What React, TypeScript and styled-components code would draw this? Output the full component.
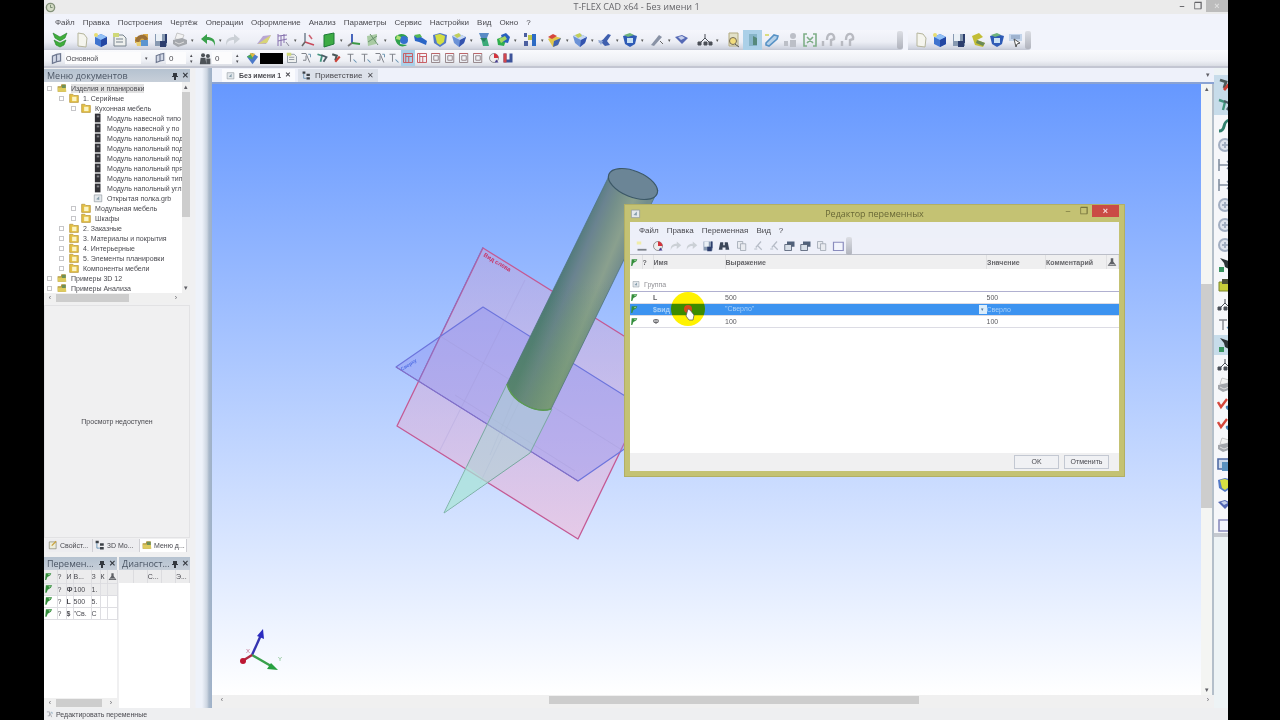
import React from 'react';
import styled, { createGlobalStyle } from 'styled-components';

const Global = createGlobalStyle`
  * { box-sizing: border-box; }
  body { margin: 0; background: #000; font-family: "Liberation Sans", Arial, sans-serif; font-size: 8px; color: #4a4a50; }
  button, input, select { font: inherit; color: inherit; margin: 0; padding: 0; border: 0; background: transparent; border-radius: 0; }
  a { color: inherit; text-decoration: none; }
  svg { display: block; flex: none; }
  table { border-collapse: collapse; table-layout: fixed; width: 100%; }
  th, td { padding: 0; text-align: left; font-weight: normal; overflow: hidden; white-space: nowrap; }
`;

/* ---------- icons ---------- */

type Glyph =
  | 'chevrons' | 'page' | 'cube' | 'sheet' | 'home' | 'save' | 'print' | 'undo' | 'redo' | 'plane' | 'grid'
  | 'axes' | 'greenPlane' | 'csys' | 'section' | 'spin' | 'sweep' | 'shield' | 'yellowShield' | 'loft' | 'bool'
  | 'pattern' | 'brick' | 'blades' | 'ring' | 'pen' | 'diamond' | 'nodes' | 'search' | 'panel' | 'link' | 'person'
  | 'bracket' | 'arrowUp' | 'coin' | 'pick' | 'layers' | 'people' | 'palette' | 'snap' | 'snapGreen' | 'snapRed'
  | 'tee' | 'boxRed' | 'boxGray' | 'pie' | 'magnet' | 'folder' | 'subfolder' | 'module' | 'part' | 'app' | 'props'
  | 'tree' | 'flag' | 'person2' | 'filter' | 'binoc' | 'copy' | 'cut' | 'windows' | 'curve' | 'orbit' | 'fit'
  | 'lamp' | 'lampYellow' | 'checkRed' | 'monitor' | 'frame';

const art: Record<Glyph, React.ReactNode> = {
  chevrons: <g fill="#3fae3a" stroke="#237f2a" strokeWidth=".6"><path d="M1 1l7 4 7-4-2 5-5 3-5-3z" /><path d="M2 8l6 3 6-3-2 5-4 2-4-2z" /></g>,
  page: <path d="M4 1l6 1 3 4-1 9-8-1z" fill="#f5f5ee" stroke="#b5b59c" />,
  cube: <g><path d="M8 2l6 3v7l-6 3-6-3V5z" fill="#3f74cf" /><path d="M8 2l6 3-6 3-6-3z" fill="#93c0f6" /><path d="M8 8l6-3v7l-6 3z" fill="#2447a3" /><circle cx="3" cy="3" r="2" fill="#e8dd72" /></g>,
  sheet: <g fill="none" stroke="#77828d"><path d="M2 3h9l3 3v8H2z" fill="#eef0ee" /><path d="M4 7h7M4 10h7" /><path d="M1 1h6v4H1z" fill="#cfd878" stroke="none" /></g>,
  home: <g><path d="M1 5h7l1-3h5v9H1z" fill="#d9a947" /><path d="M1 9c2-8 11-8 13-2l-3 2c-2-4-5-3-6 2z" fill="#9b7138" /><path d="M7 8h7v6H5z" fill="#5b95d0" /><path d="M2 10h5v4H3z" fill="#e8ce72" /></g>,
  save: <g><path d="M2 2h12v12H2z" fill="#8799b1" /><path d="M3 2h6v7H3z" fill="#eaf0f6" /><path d="M7 9h6v6H7zM12 2h2v9h-2z" fill="#2d3e6d" /></g>,
  print: <g><path d="M5 1l7 2-2 5-7-1z" fill="#f2f2f2" stroke="#b5b5b5" strokeWidth=".7" /><path d="M1 8l9-2 5 2v4l-9 3-5-3z" fill="#a4a7ac" /><path d="M3 10l4 2 5-2" stroke="#ddd" fill="none" /></g>,
  undo: <path d="M1 7l6-5v3c5 0 8 2 8 7v2c-1-4-3-6-8-6v4z" fill="#39a04b" />,
  redo: <path d="M15 7L9 2v3C4 5 1 7 1 12v2c1-4 3-6 8-6v4z" fill="#cbd0d6" />,
  plane: <g><path d="M1 12l6-8 8-1-5 9z" fill="#b9a6d3" /><path d="M2 12l7-5 6-4-4 8z" fill="#d8d477" /></g>,
  grid: <g stroke="#8671ae" fill="none"><path d="M3 2v12M6 4v10M9 2v9M3 4l9-1M3 9l9-2" /><path d="M11 10l3 4" stroke="#889" /></g>,
  axes: <g fill="none" strokeWidth="1.6"><path d="M5 1v9" stroke="#7c8896" /><path d="M5 10l9 3" stroke="#c9485a" /><path d="M5 10l-3 4" stroke="#666" /><path d="M9 3l3 4" stroke="#cc6170" /></g>,
  greenPlane: <path d="M3 3l10-2v11L3 15z" fill="#3dab44" stroke="#1c7a36" />,
  csys: <g fill="none" strokeWidth="1.8"><path d="M6 2v9" stroke="#3455b5" /><path d="M6 11l8 1" stroke="#3c9946" /><path d="M6 11l-4 3" stroke="#777" /></g>,
  section: <g><path d="M2 4l10-2-1 10-8 2z" fill="#a9cba3" /><path d="M5 2l8 11M3 10l9-6" stroke="#69926e" /></g>,
  spin: <g><path d="M1 5c5-5 11-3 13 1l-4 1-3-1-1 6 7 1c-6 4-12-1-12-8z" fill="#2fa04c" /><circle cx="10" cy="8" r="4" fill="#3470cf" /><path d="M3 3l4 2-1 3-4-1z" fill="#aee173" /></g>,
  sweep: <g><path d="M1 4l7 1 6 4-1 4-7-3-4-1z" fill="#2a65c6" /><path d="M1 3l6-1 2 3-5 1z" fill="#54b754" /></g>,
  shield: <g><path d="M1 4l7-2 7 3-2 6-5 4-5-4z" fill="#6b92d7" /><path d="M1 4l7-2 7 3-6 3z" fill="#c7d8f2" /><path d="M9 8l6-3-2 6-5 4z" fill="#3453ae" /><path d="M3 3l5-2 2 3-4 2z" fill="#c1cf5c" /></g>,
  yellowShield: <g><path d="M1 3l7-2 7 2-1 8-6 4-6-4z" fill="#5379c6" /><path d="M3 3l5-1 5 2-1 6-4 3-3-2z" fill="#d5df42" /></g>,
  loft: <g><path d="M3 1h10l-2 5H5z" fill="#5a8bc6" /><path d="M5 6h6l2 8H7z" fill="#3cab79" /><path d="M4 6h7l-3 4z" fill="#278060" /></g>,
  bool: <g><path d="M2 7l5-2 4 3-2 6-6-1z" fill="#2fae4e" /><path d="M6 3l5-2 4 4-2 6-5-1z" fill="#2961be" /><path d="M4 7l6-3 2 3-6 4z" fill="#a5d661" /></g>,
  pattern: <g><path d="M2 1h3v4H2zM2 9h4v5H2z" fill="#4b5fa0" /><path d="M6 3h4v5H6z" fill="#bfc74a" /><path d="M10 2h4v12h-4z" fill="#2d6bc4" /></g>,
  brick: <g><path d="M1 7l6-3 7 2-3 7-5 2z" fill="#e0c64a" /><path d="M1 5l5-3 4 2-5 3z" fill="#d5463d" /><path d="M7 9l7-3-3 7-5 2z" fill="#3f63b2" /></g>,
  blades: <g><path d="M1 10c5-1 6-4 10-8l3 1-4 6 3 4-5 1-3-3z" fill="#3f5fae" /><path d="M1 8l5 1-2 4z" fill="#8ea6d4" /></g>,
  ring: <g><path d="M1 4l7-2 7 2-2 8-5 3-5-3z" fill="#2f5bb6" /><path d="M5 6h6v5H5z" fill="#c9e1f4" /><path d="M2 3l6-2 4 2-6 2z" fill="#6fb37b" /></g>,
  pen: <g><path d="M2 13l8-10 3 2-8 9z" fill="#8992a5" /><path d="M11 9l3 3" stroke="#666" /></g>,
  diamond: <g><path d="M1 5l7-2 6 3-6 6z" fill="#5569b5" /><path d="M4 5l4-1 3 2-4 2z" fill="#c6d0eb" /></g>,
  nodes: <g stroke="#4a4f57" fill="#4a4f57"><path d="M3 11l5-5 5 5M8 6V2" fill="none" /><path d="M1 10h3v3H1zM7 10h3v3H7zM12 10h3v3h-3z" /></g>,
  search: <g><path d="M3 1h9v13H3z" fill="#e2e1c8" stroke="#b3ab80" /><circle cx="7" cy="9" r="3.5" fill="#f2dc7d" stroke="#766c57" /><path d="M9 12l4 3" stroke="#555" /></g>,
  panel: <g><path d="M4 2h8v12H4z" fill="#86b4c8" /><path d="M8 4l4 2v7H8z" fill="#55897b" /></g>,
  link: <g fill="none" stroke="#5792c5" strokeWidth="1.6"><path d="M2 11l8-8 4 1-1 3-8 7-3-1z" fill="#b5d0e8" /><path d="M1 3h4" stroke="#d5d760" /></g>,
  person: <g fill="#bcbfc7"><circle cx="10" cy="4" r="3" /><path d="M7 8h6v7H7zM1 9h4v5H1z" /></g>,
  bracket: <g fill="none" stroke="#7fae87" strokeWidth="1.6"><path d="M5 2H2v12h3M11 2h3v12h-3M5 5l6 6M11 5l-6 6" /></g>,
  arrowUp: <g fill="none" stroke="#b8bac1" strokeWidth="2.4"><path d="M2 14V9M6 8c0-8 8-8 7-1l-3 1v6" /></g>,
  coin: <g><path d="M2 4l7-3 4 4-6 3 8 3-2 4-8-2z" fill="#c2bd35" /><path d="M7 8l8 3-2 3-7-3z" fill="#6b8a56" /></g>,
  pick: <g><path d="M1 2h13v7H1z" fill="#c3d4ea" /><path d="M3 4h9M3 6h9" stroke="#7a92b4" /><path d="M6 7l6 4-3 1-1 3z" fill="#fff" stroke="#555" /></g>,
  layers: <g fill="none" stroke="#6e7890" strokeWidth="1.5"><path d="M3 5l5-2v9l-5 2zM8 3l5-1v9l-5 1" fill="#d2d8e6" /></g>,
  people: <g fill="#4d5257"><circle cx="5" cy="4" r="2.5" /><circle cx="11" cy="5" r="2.5" /><path d="M2 7h6l1 8H1zM9 8h5v7H9z" /></g>,
  palette: <g><path d="M2 6l6-4 6 4-6 8z" fill="#4c79c9" /><path d="M2 6l6-4v7z" fill="#4ba853" /><path d="M5 2l6 1-3 4z" fill="#e0b93d" /></g>,
  snap: <g fill="none" stroke="#7d8188" strokeWidth="1.3"><path d="M2 2h6l5 12M8 5v6H4" /><path d="M11 3h3v4" stroke="#6d95b1" /></g>,
  snapGreen: <g fill="none" strokeWidth="2.4"><path d="M2 3l6 2-2 8" stroke="#42947e" /><path d="M7 4l7 3-4 6" stroke="#4b5c66" /></g>,
  snapRed: <g fill="none" strokeWidth="2.8"><path d="M3 3l6 2-2 6" stroke="#4c5a5a" /><path d="M7 13l6-7" stroke="#cb4036" /></g>,
  tee: <g fill="none" stroke="#85888f" strokeWidth="1.4"><path d="M2 3h8M6 3v10" /><path d="M10 10l4 4" stroke="#6390b1" /></g>,
  boxRed: <g fill="none" stroke="#c65b62" strokeWidth="1.3"><path d="M2 2h12v12H2zM5 2v12M5 6h9M9 6v8" /></g>,
  boxGray: <g fill="none" stroke="#96888c" strokeWidth="1.3"><path d="M2 2h11v12H2zM5 5h6v6H5z" /><path d="M2 2h11" stroke="#bd6468" /></g>,
  pie: <g><circle cx="8" cy="8" r="6" fill="#eee" stroke="#777" /><path d="M8 8V2a6 6 0 0 1 6 6z" fill="#d5333c" /><path d="M11 10l3 4h-5z" fill="#463c91" /></g>,
  magnet: <g><path d="M2 2h4v8h4V2h4v12H2z" fill="#3d5399" /><path d="M2 2h4v12H2z" fill="#d2474b" /></g>,
  folder: <g><path d="M1 5h5l1-3h7v12H1z" fill="#b2973e" /><path d="M1 7h13l1 7H2z" fill="#decb5e" /><path d="M8 3h6v5H8z" fill="#6f9157" /></g>,
  subfolder: <g><path d="M1 2h5l2 2h7v11H1z" fill="#e3bf45" stroke="#b08f30" /><path d="M5 6h7v7H5z" fill="#fbf4c3" /></g>,
  module: <g><path d="M3 1h9v14H3z" fill="#313136" /><path d="M6 4h4v3H6z" fill="#85858b" /></g>,
  part: <g><path d="M2 3h12v11H2z" fill="#e4e8ec" stroke="#8b949c" /><path d="M5 10l5-5v6z" fill="#879fad" /></g>,
  app: <g><circle cx="8" cy="8" r="6" fill="#d4dcc6" stroke="#83917a" strokeWidth="2" /><path d="M8 4v4h3" stroke="#566f52" fill="none" /></g>,
  props: <g><path d="M2 3h11v11H2z" fill="#ededdb" stroke="#7c7c66" /><path d="M6 9l7-7" stroke="#c9a13b" strokeWidth="2" /></g>,
  tree: <g fill="#3c4147"><path d="M1 1h5v4H1zM8 5h6v4H8zM8 11h6v4H8z" /><path d="M3 5v8h5" fill="none" stroke="#2c6a9b" /></g>,
  flag: <g><path d="M3 2h10l-2 4-5 3-2 5H2z" fill="#348d3c" /><path d="M7 4l4-1-2 3z" fill="#a6dca6" /></g>,
  person2: <g fill="#5e6065"><path d="M6 2h4v5l5 7H1l5-7z" /><path d="M4 12h8" stroke="#eee" /></g>,
  filter: <g><path d="M1 2h6v4H1z" fill="#f0eda8" /><path d="M2 13h12" stroke="#7d838b" strokeWidth="2.4" /></g>,
  binoc: <g fill="#3c4658"><path d="M3 3h4v4h2V3h4l2 10h-5v-3H6v3H1z" /></g>,
  copy: <g fill="#e9ebf0" stroke="#9aa1ac"><path d="M2 2h7v9H2z" /><path d="M6 5h7v9H6z" /></g>,
  cut: <g fill="none" stroke="#b6bcc7" strokeWidth="1.6"><path d="M12 2L5 10M13 13L8 8M3 12h4" /></g>,
  windows: <g><path d="M4 2h10v7H4z" fill="#51617a" /><path d="M1 6h9v8H1z" fill="#d8dfe8" stroke="#445066" /></g>,
  curve: <path d="M2 14c8 0 2-10 11-11" fill="none" stroke="#30806d" strokeWidth="3" />,
  orbit: <g fill="none" stroke="#a3afc2" strokeWidth="2"><circle cx="8" cy="8" r="6" fill="#dfe4ee" /><path d="M5 8h6M8 5v6" /></g>,
  fit: <g fill="none" stroke="#838fa0" strokeWidth="1.6"><path d="M2 2v12M2 8h12M10 4l4 4-4 4" /></g>,
  lamp: <g><path d="M3 1l12 4-1 8-6-3-1-4z" fill="#2d3337" /><path d="M2 10h5v5H2z" fill="#37935f" /></g>,
  lampYellow: <g><path d="M2 5h12v9H2z" fill="#c6cc3a" stroke="#7b862c" /><path d="M5 2h8v5H5z" fill="#4a4e37" /></g>,
  checkRed: <g fill="none"><path d="M1 5l3 5 6-8" stroke="#d5483d" strokeWidth="2.4" /><path d="M9 9a3 3 0 1 0 5-1z" fill="#4b82b7" /></g>,
  monitor: <g><path d="M1 2h13v10H1z" fill="#ccd9ea" stroke="#506ba5" strokeWidth="1.6" /><path d="M5 5h8v9H5z" fill="#5b92bf" /></g>,
  frame: <path d="M2 3h13v11H2z" fill="#f2f4fc" stroke="#8a8cbd" strokeWidth="1.6" />,
};

function Icon({ name, size = 16 }: { name: Glyph; size?: number }) {
  return <svg width={size} height={size} viewBox="0 0 16 16" aria-hidden="true">{art[name]}</svg>;
}

/* ---------- shell ---------- */

const Screen = styled.div`
  min-height: 100vh; display: flex; padding: 0 52px 0 44px; background: #000;
`;
const AppWindow = styled.div`
  flex: 1; min-width: 0; display: flex; flex-direction: column; background: #f1f4fb; overflow: hidden;
`;
const TitleBar = styled.header`
  height: 14px; display: grid; grid-template-columns: 1fr auto 1fr; align-items: center; background: #ebebeb; padding-left: 1px;
`;
const AppTitle = styled.h1`
  margin: 0; font: 9px/14px "Open Sans", sans-serif; color: #66666a;
`;
const WindowButtons = styled.div`
  display: flex; justify-content: flex-end; align-self: stretch;
`;
const WindowButton = styled.button<{ $w?: number; $bg?: string; $fg?: string }>`
  width: ${p => p.$w ?? 16}px; height: 12px; display: flex; align-items: center; justify-content: center;
  background: ${p => p.$bg ?? 'transparent'}; color: ${p => p.$fg ?? '#626266'}; font-size: 9px; line-height: 10px; font-weight: bold;
`;
const MenuBar = styled.nav<{ $dialog?: boolean }>`
  height: 16px; display: flex; align-items: center; gap: 8px; padding-left: ${p => (p.$dialog ? 9 : 11)}px;
  background: ${p => (p.$dialog ? '#edf0f9' : '#f1f3fb')};
`;
const ToolbarRow = styled.div`
  display: flex; gap: 5px; height: 20px; background: #f2f4fc;
`;
const Toolbar = styled.div<{ $pad?: number }>`
  display: flex; align-items: center; height: 20px; padding-left: ${p => p.$pad ?? 6}px; border-radius: 0 3px 3px 0;
  background: linear-gradient(#f5f6fc 0%, #eceef5 60%, #d2d6e1 90%, #c2c6d2 100%);
`;
const Grip = styled.span<{ $push?: number }>`
  width: 6px; height: 18px; margin-left: ${p => p.$push ?? 0}px; background: linear-gradient(#dcdee4, #b0b3bd);
  border-radius: 2px; flex: none;
`;
const Tool = styled.button<{ $on?: boolean; $w?: number }>`
  width: ${p => p.$w ?? 19}px; height: 100%; flex: none; display: flex; align-items: center; justify-content: center;
  background: ${p => (p.$on ? '#abd0e8' : 'transparent')};
`;
const Drop = styled.button`
  width: 6px; height: 100%; flex: none; font-size: 5px; display: flex; align-items: center; justify-content: center; color: #555;
`;
const Gap = styled.span<{ $w: number }>`
  flex: none; width: ${p => p.$w}px;
`;
const StyleBar = styled.div`
  height: 18px; display: flex; align-items: center; padding: 0 6px 2px 6px;
  background: linear-gradient(#f9fafd 0%, #eef0f5 60%, #dadde4 88%, #c3c6d2 90%, #c3c6d2 100%);
`;
const SnapBox = styled.div`
  display: flex; align-items: center; align-self: stretch;
`;
const LayerSelect = styled.select`
  width: 76px; height: 12px; appearance: none; background: #fcfcfd; padding-left: 1px; font-size: 7px;
`;
const NumberField = styled.input`
  width: 20px; height: 12px; background: #fcfcfd; padding-left: 3px;
`;
const Spin = styled.span`
  width: 10px; display: flex; flex-direction: column; font-size: 5px; line-height: 6px; align-items: center; margin-right: 3px;
`;
const Swatch = styled.button`
  width: 23px; height: 11px; background: #000; margin-right: 2px;
`;
const Body = styled.div`
  flex: 1; min-height: 0; display: flex;
`;

/* ---------- left dock ---------- */

const Dock = styled.aside`
  width: 146px; flex: none; display: flex; flex-direction: column; background: #f0f0f1; padding-top: 1px;
`;
const DockHead = styled.div`
  height: 13px; flex: none; display: flex; align-items: center; background: linear-gradient(#b5c2d0, #c7cfd9);
  color: #4a5564; padding: 0 0 0 3px;
  h2 { margin: 0; flex: 1; font: 9px/13px "Open Sans", sans-serif; white-space: nowrap; }
`;
const HeadButton = styled.button`
  width: 10px; height: 12px; font-size: 8px; line-height: 10px; font-weight: bold; color: #33383f;
  display: flex; align-items: center; justify-content: center;
`;
const TreeWrap = styled.div`
  display: flex; height: 211px; flex: none; background: #fff; overflow: hidden;
`;
const Tree = styled.ul`
  flex: 1; min-width: 0; margin: 0; padding: 1px 0 0 2px; list-style: none; overflow: hidden; font-size: 7px;
`;
const TreeRow = styled.li<{ $level: number }>`
  height: 10px; display: flex; align-items: center; padding-left: ${p => p.$level * 12}px; white-space: nowrap;
`;
const Expander = styled.span`
  width: 5px; height: 5px; flex: none; margin: 0 5px 0 1px; border: 1px solid #c6c6c9;
`;
const Label = styled.span<{ $on?: boolean }>`
  margin-left: 3px; line-height: 9px; background: ${p => (p.$on ? '#e1e1e1' : 'transparent')};
`;
const VBar = styled.div<{ $w: number; $bg?: string }>`
  width: ${p => p.$w}px; flex: none; display: flex; flex-direction: column; align-items: center; background: ${p => p.$bg ?? '#f0f0f0'};
`;
const HBar = styled.div<{ $h?: number }>`
  height: ${p => p.$h ?? 10}px; flex: none; display: flex; align-items: center; background: #f0f0f0;
`;
const Arrow = styled.button`
  width: 12px; height: 10px; flex: none; font-size: 7px; line-height: 10px; text-align: center; color: #606066;
`;
const Thumb = styled.div<{ $len: string; $push?: string; $v?: boolean }>`
  background: #cdcdcd; flex: none;
  ${p => (p.$v
    ? `width: 100%; height: ${p.$len}; margin-top: ${p.$push ?? 0};`
    : `height: 8px; width: ${p.$len}; margin-left: ${p.$push ?? 0};`)}
`;
const Fill = styled.span`flex: 1;`;
const Preview = styled.div`
  flex: 1; margin-top: 2px; border: 1px solid #e2e2e4; display: flex; align-items: center; justify-content: center; font-size: 7px;
`;
const DockTabs = styled.div`
  height: 14px; flex: none; display: flex; align-items: center; padding-left: 2px; margin-bottom: 5px; font-size: 7px;
`;
const DockTab = styled.button<{ $on?: boolean }>`
  width: 47px; height: 13px; display: flex; align-items: center; gap: 2px; padding-left: 2px; white-space: nowrap;
  background: ${p => (p.$on ? '#fff' : '#ededf0')}; border-right: 1px solid #cfcfd4;
`;
const Split = styled.div`
  height: 151px; flex: none; display: flex; gap: 2px;
`;
const MiniPanel = styled.section<{ $w: number }>`
  width: ${p => p.$w}px; flex: none; display: flex; flex-direction: column; background: #fff;
  table { font-size: 7px; }
  th { height: 13px; background: #ececed; border-right: 1px solid #dcdcdf; }
  tbody td { height: 12px; border: 1px solid #dedee2; border-left: 0; }
  tbody tr:first-child td { background: #ececed; }
`;
const Gutter = styled.div`
  width: 22px; flex: none;
  background: linear-gradient(90deg, #f0f0f2 0, #f0f0f2 5px, #eef2fa 6px, #eef2fa 12px, #ccd5e1 17px, #a9b8ca 19px, #9db0c8 22px);
`;

/* ---------- document view ---------- */

const DocArea = styled.main`
  flex: 1; min-width: 0; display: flex; flex-direction: column;
`;
const DocTabs = styled.div`
  height: 16px; flex: none; display: flex; align-items: center; padding-left: 10px; background: #eef1fa;
  border-bottom: 2px solid #8aa3d3;
`;
const DocTab = styled.button<{ $on?: boolean }>`
  height: 13px; display: flex; align-items: center; gap: 4px; padding: 0 4px; font-weight: ${p => (p.$on ? 'bold' : 'normal')};
  background: ${p => (p.$on ? '#fafbfe' : '#dce1ea')}; font-size: ${p => (p.$on ? 7 : 8)}px; white-space: nowrap;
`;
const ViewRow = styled.div`
  flex: 1; min-height: 0; display: flex; border-right: 2px solid #b4bfca;
`;
const Canvas = styled.div`
  flex: 1; min-width: 0; position: relative; overflow: hidden;
  background: linear-gradient(#6698ff 0%, #b3ccff 50%, #fff 100%);
`;
const RightTools = styled.div`
  width: 14px; flex: none; overflow: hidden; padding-top: 7px; background: #edf3f5;
`;
const RightStrip = styled.div`
  height: 462px; border-bottom: 4px solid #c5c9cf; background: #f6f7fa; overflow: hidden;
`;
const RightTool = styled.button<{ $on?: boolean }>`
  width: 20px; height: 20px; padding-left: 3px; display: flex; align-items: center;
  background: ${p => (p.$on ? '#c7dcea' : 'transparent')};
`;
const StatusBar = styled.footer`
  height: 12px; flex: none; display: flex; align-items: center; gap: 3px; padding-left: 2px; background: #eeeff1; font-size: 7px;
`;

/* ---------- dialog ---------- */

const Dialog = styled.section`
  position: absolute; left: 412px; top: 120px; width: 501px; height: 273px; display: flex; flex-direction: column;
  background: #c4c273; padding: 0 5px 5px; border: 1px solid #b2af65;
`;
const DialogTitle = styled.div`
  height: 17px; flex: none; display: grid; grid-template-columns: 1fr auto 1fr; align-items: center;
  h2 { margin: 0; font: 9px/17px "Open Sans", sans-serif; color: #6a6937; }
`;
const DialogBody = styled.div`
  flex: 1; display: flex; flex-direction: column; background: #fff; min-height: 0;
`;
const DialogTools = styled.div`
  height: 17px; flex: none; display: flex; align-items: center; padding-left: 4px; background: #eef0f9; border-bottom: 1px solid #bbbec8;
`;
const VarTable = styled.table`
  font-size: 7px;
  thead th { height: 14px; background: #efeff0; border-right: 1px solid #e0e0e2; font-weight: bold; color: #66666a; }
  tbody td { height: 12px; border-bottom: 1px solid #dcdce4; }
`;
const GroupRow = styled.tr`
  && td { height: 22px; vertical-align: bottom; color: #919196; border-bottom: 1px solid #b0b0d0; }
`;
const GroupLabel = styled.span`
  display: flex; align-items: center; gap: 4px; height: 13px; padding-left: 2px; font-size: 7px;
`;
const VarRow = styled.tr<{ $on?: boolean }>`
  && td { background: ${p => (p.$on ? '#3c93f0' : 'transparent')}; color: ${p => (p.$on ? '#a9d0f8' : '#5c5c60')}; }
`;
const CellDrop = styled.button`
  float: right; width: 8px; height: 9px; background: #d9ecfb; color: #56789b; font-size: 5px; line-height: 9px;
`;
const DialogFoot = styled.div`
  height: 18px; flex: none; margin-top: auto; display: flex; gap: 5px; align-items: center; justify-content: flex-end;
  padding-right: 10px; background: #f0f0f1;
`;
const PushButton = styled.button`
  width: 45px; height: 14px; border: 1px solid #c3c8d2; background: #f0f1f4; font-size: 7px; line-height: 10px;
`;
const Spot = styled.div`
  position: absolute; left: 459px; top: 208px; width: 34px; height: 34px; border-radius: 50%; background: #fff200; mix-blend-mode: multiply;
`;
const Pointer = styled.svg`
  position: absolute; left: 471px; top: 220px;
`;

/* ---------- data ---------- */

type ToolItem = { g: Glyph; label: string; drop?: boolean; on?: boolean; gap?: number };

const mainTools: ToolItem[] = [
  { g: 'chevrons', label: 'Завершить', gap: 3 },
  { g: 'page', label: 'Новый чертёж' }, { g: 'cube', label: 'Новая 3D модель' }, { g: 'sheet', label: 'Новый документ', gap: 3 },
  { g: 'home', label: 'Открыть' }, { g: 'save', label: 'Сохранить' }, { g: 'print', label: 'Печать', drop: true, gap: 3 },
  { g: 'undo', label: 'Отменить действие', drop: true }, { g: 'redo', label: 'Повторить', gap: 12 },
  { g: 'plane', label: 'Рабочая плоскость' }, { g: 'grid', label: 'Сетка', drop: true }, { g: 'axes', label: '3D узел', gap: 2 },
  { g: 'greenPlane', label: 'Рабочая поверхность', drop: true }, { g: 'csys', label: 'Система координат' },
  { g: 'section', label: 'Сечение', drop: true, gap: 4 }, { g: 'spin', label: 'Вращение' }, { g: 'sweep', label: 'По траектории' },
  { g: 'yellowShield', label: 'Оболочка' }, { g: 'shield', label: 'Сглаживание', drop: true }, { g: 'loft', label: 'По сечениям' },
  { g: 'bool', label: 'Булева операция', drop: true, gap: 2 }, { g: 'pattern', label: 'Массив', drop: true },
  { g: 'brick', label: 'Отсечение', drop: true }, { g: 'shield', label: 'Уклон', drop: true }, { g: 'blades', label: 'Лопасти', drop: true },
  { g: 'ring', label: 'Отверстие', drop: true, gap: 2 }, { g: 'pen', label: 'Резьба', drop: true }, { g: 'diamond', label: 'Материал', gap: 4 },
  { g: 'nodes', label: 'Сборка', drop: true, gap: 4 }, { g: 'search', label: 'Найти' }, { g: 'panel', label: 'Панель', on: true },
  { g: 'link', label: 'Связь' }, { g: 'person', label: 'Сопряжение' }, { g: 'bracket', label: 'Границы' },
  { g: 'arrowUp', label: 'Вверх' }, { g: 'arrowUp', label: 'Вниз' },
];
const sideTools: ToolItem[] = [
  { g: 'page', label: 'Страница' }, { g: 'cube', label: 'Тело' }, { g: 'save', label: 'Записать' }, { g: 'coin', label: 'Пересчёт' },
  { g: 'ring', label: 'Вид' }, { g: 'pick', label: 'Выбор' },
];
const snapTools: ToolItem[] = [
  { g: 'sheet', label: 'Слой' }, { g: 'snap', label: 'Привязка', gap: 2 }, { g: 'snapGreen', label: 'Конец' }, { g: 'snapRed', label: 'Середина', gap: 2 },
  { g: 'tee', label: 'Касание' }, { g: 'tee', label: 'Нормаль' }, { g: 'snap', label: 'Пересечение' }, { g: 'tee', label: 'Центр' },
  { g: 'boxRed', label: 'Рёбра', on: true }, { g: 'boxRed', label: 'Грани' }, { g: 'boxGray', label: 'Тела' }, { g: 'boxGray', label: 'Вершины' },
  { g: 'boxGray', label: 'Циклы' }, { g: 'boxGray', label: 'Операции', gap: 2 }, { g: 'pie', label: 'Цвет' }, { g: 'magnet', label: 'Магнит' },
];
const rightTools: { g: Glyph; on?: boolean }[] = [
  { g: 'snapRed', on: true }, { g: 'snapGreen', on: true }, { g: 'curve' }, { g: 'orbit' }, { g: 'fit' }, { g: 'fit' }, { g: 'orbit' },
  { g: 'orbit' }, { g: 'orbit' }, { g: 'lamp' }, { g: 'lampYellow' }, { g: 'nodes' }, { g: 'tee' }, { g: 'lamp', on: true }, { g: 'nodes' },
  { g: 'print' }, { g: 'checkRed' }, { g: 'checkRed' }, { g: 'print' }, { g: 'monitor' }, { g: 'yellowShield' }, { g: 'diamond' }, { g: 'frame' },
];
const tree: [number, Glyph, string][] = [
  [0, 'folder', 'Изделия и планировки'], [1, 'subfolder', '1. Серийные'], [2, 'subfolder', 'Кухонная мебель'],
  [3, 'module', 'Модуль навесной типо'], [3, 'module', 'Модуль навесной у по'], [3, 'module', 'Модуль напольный под'],
  [3, 'module', 'Модуль напольный под'], [3, 'module', 'Модуль напольный под'], [3, 'module', 'Модуль напольный пря'],
  [3, 'module', 'Модуль напольный тип'], [3, 'module', 'Модуль напольный угл'], [3, 'part', 'Открытая полка.grb'],
  [2, 'subfolder', 'Модульная мебель'], [2, 'subfolder', 'Шкафы'], [1, 'subfolder', '2. Заказные'],
  [1, 'subfolder', '3. Материалы и покрытия'], [1, 'subfolder', '4. Интерьерные'], [1, 'subfolder', '5. Элементы планировки'],
  [1, 'subfolder', 'Компоненты мебели'], [0, 'folder', 'Примеры 3D 12'], [0, 'folder', 'Примеры Анализа'],
];
const menus = ['Файл', 'Правка', 'Построения', 'Чертёж', 'Операции', 'Оформление', 'Анализ', 'Параметры', 'Сервис', 'Настройки', 'Вид', 'Окно', '?'];
const dialogTools: ToolItem[] = [
  { g: 'filter', label: 'Новая' }, { g: 'pie', label: 'Изменить', gap: 2 }, { g: 'redo', label: 'Назад' }, { g: 'redo', label: 'Вперёд' },
  { g: 'save', label: 'Сохранить' }, { g: 'binoc', label: 'Найти', gap: 2 }, { g: 'copy', label: 'Копировать' }, { g: 'cut', label: 'Вырезать' },
  { g: 'cut', label: 'Вставить' }, { g: 'windows', label: 'Окно' }, { g: 'windows', label: 'Таблица' },
  { g: 'copy', label: 'Список' }, { g: 'frame', label: 'Рамка' },
];
const variables = [
  { name: 'L', expr: '500', value: '500' },
  { name: '$вид', expr: '"Сверло"', value: 'Сверло', on: true },
  { name: 'Ф', expr: '100', value: '100' },
];

/* ---------- parts ---------- */

function ToolItems({ items, width, size }: { items: ToolItem[]; width?: number; size?: number }) {
  return (
    <>
      {items.map((t, i) => (
        <React.Fragment key={i}>
          <Tool $w={width} $on={t.on} aria-label={t.label}><Icon name={t.g} size={size} /></Tool>
          {t.drop && <Drop aria-label={`${t.label}: список`}>▾</Drop>}
          {t.gap && <Gap $w={t.gap} />}
        </React.Fragment>
      ))}
    </>
  );
}

function Header({ title }: { title: string }) {
  return (
    <DockHead>
      <h2>{title}</h2>
      <HeadButton aria-label="Закрепить">
        <svg width="6" height="8" viewBox="0 0 6 8"><path d="M1 1h4v3H1zM0 4h6v1H0zM2 5h2v3H2z" fill="#33383f" /></svg>
      </HeadButton>
      <HeadButton aria-label="Закрыть">✕</HeadButton>
    </DockHead>
  );
}

function LeftDock() {
  return (
    <Dock>
      <Header title="Меню документов" />
      <TreeWrap>
        <Tree>
          {tree.map(([level, glyph, text], i) => (
            <TreeRow key={i} $level={level}>
              {level < 3 && <Expander />}
              {level === 3 && <Gap $w={11} />}
              <Icon name={glyph} size={10} />
              <Gap $w={1} />
              <Label $on={i === 0}>{text}</Label>
            </TreeRow>
          ))}
        </Tree>
        <VBar $w={8}><Arrow aria-label="Вверх">▴</Arrow><Thumb $v $len="125px" /><Fill /><Arrow aria-label="Вниз">▾</Arrow></VBar>
      </TreeWrap>
      <HBar><Arrow aria-label="Влево">‹</Arrow><Thumb $len="73px" /><Fill /><Arrow aria-label="Вправо">›</Arrow><Gap $w={8} /></HBar>
      <Preview>Просмотр недоступен</Preview>
      <DockTabs>
        <DockTab><Icon name="props" size={10} />Свойст...</DockTab>
        <DockTab><Icon name="tree" size={10} />3D Мо...</DockTab>
        <DockTab $on><Icon name="folder" size={10} />Меню д...</DockTab>
      </DockTabs>
      <Split>
        <MiniPanel $w={73}>
          <Header title="Перемен..." />
          <table>
            <colgroup><col width="13" /><col width="9" /><col width="7" /><col width="18" /><col width="9" /><col width="7" /><col width="10" /></colgroup>
            <thead><tr><th><Icon name="flag" size={9} /></th><th>?</th><th>И</th><th>В...</th><th>З</th><th>К</th><th><Icon name="person2" size={9} /></th></tr></thead>
            <tbody>
              {[['Ф', '100', '1.'], ['L', '500', '5.'], ['$', '"Св.', 'С']].map(r => (
                <tr key={r[0]}><td><Icon name="flag" size={10} /></td><td>?</td><td><b>{r[0]}</b></td><td>{r[1]}</td><td>{r[2]}</td><td /><td /></tr>
              ))}
            </tbody>
          </table>
          <Fill />
          <HBar><Arrow aria-label="Влево">‹</Arrow><Thumb $len="46px" /><Fill /><Arrow aria-label="Вправо">›</Arrow></HBar>
        </MiniPanel>
        <MiniPanel $w={71}>
          <Header title="Диагност..." />
          <table>
            <thead><tr><th /><th /><th>С...</th><th /><th>Э...</th></tr></thead>
          </table>
        </MiniPanel>
      </Split>
    </Dock>
  );
}

function Scene() {
  return (
    <svg width="989" height="611" aria-label="3D модель">
      <defs>
        <linearGradient id="tube" gradientUnits="userSpaceOnUse" x1="556" y1="285" x2="605" y2="305">
          <stop offset="0" stopColor="#4f7a78" /><stop offset=".25" stopColor="#6a8390" /><stop offset=".45" stopColor="#748f8a" />
          <stop offset=".75" stopColor="#8aa08e" /><stop offset="1" stopColor="#738d8d" />
        </linearGradient>
        <linearGradient id="moss" x1="0" y1="0" x2="0" y2="1">
          <stop offset=".45" stopColor="#4d8a4f" stopOpacity="0" /><stop offset="1" stopColor="#659161" stopOpacity=".5" />
        </linearGradient>
        <linearGradient id="redPlane" x1="0" y1="0" x2="0" y2="1">
          <stop offset="0" stopColor="#c9a6d8" stopOpacity=".42" /><stop offset="1" stopColor="#f0b4d4" stopOpacity=".55" />
        </linearGradient>
      </defs>
      <g transform="translate(-212 -84)" strokeLinejoin="round">
        <path d="M483 248L397 426l181 113 86-178z" fill="url(#redPlane)" stroke="#c45a94" strokeWidth="1.3" />
        <path d="M396 367l87-60 182 114-87 60z" fill="#8f8ff0" fillOpacity=".38" stroke="#6c74dc" strokeWidth="1.2" />
        <path d="M418 382l65-135M578 481l-182-114" stroke="#8a6fc0" fill="none" />
        <path d="M440 336l182 114M525 280l-86 172M566 305l-86 178M530 360l-40 95M455 395l120 76" stroke="#9b93cf" strokeOpacity=".25" fill="none" />
        <path d="M507 384L444 513l86-60 22-44c-17 2-34-7-45-25z" fill="#a9d4d0" fillOpacity=".5" stroke="#78a89f" />
        <path d="M467 466L444 513l44-31z" fill="#a8f0dc" fillOpacity=".45" />
        <path d="M609 176L507 384c4 17 28 30 44 25l107-219z" fill="url(#tube)" stroke="#4f7480" strokeWidth=".8" />
        <path d="M609 176L507 384c4 17 28 30 44 25l107-219z" fill="url(#moss)" />
        <path d="M507 384c4 17 28 30 44 25" fill="none" stroke="#5c9b52" strokeWidth="1.4" />
        <ellipse cx="633" cy="184" rx="26" ry="13" transform="rotate(22 633 184)" fill="#6b8596" stroke="#3c5867" strokeWidth="1.2" />
        <text x="483" y="256" transform="rotate(31 483 256)" fontSize="6" fontWeight="bold" fill="#c83668">Вид слева</text>
        <text x="402" y="371" transform="rotate(-33 402 371)" fontSize="5" fontWeight="bold" fill="#536fe4">Сверху</text>
        <g strokeWidth="2.4" fill="none">
          <path d="M252 655l9-20" stroke="#3434b0" /><path d="M252 655l19 11" stroke="#3aa04c" /><path d="M252 655l-8 5" stroke="#b02740" />
        </g>
        <path d="M263 629l1 10-7-3z" fill="#2b2bc0" /><path d="M278 670l-11-1 4-6z" fill="#27a040" /><circle cx="243" cy="661" r="3" fill="#bd1733" />
        <text x="278" y="661" fontSize="6" fill="#72b77d">Y</text><text x="246" y="653" fontSize="6" fill="#bf6c8d">X</text>
      </g>
    </svg>
  );
}

function VariablesDialog() {
  return (
    <Dialog role="dialog" aria-label="Редактор переменных">
      <DialogTitle>
        <Icon name="part" size={11} />
        <h2>Редактор переменных</h2>
        <WindowButtons>
          <WindowButton $fg="#8c8a4d" aria-label="Свернуть">–</WindowButton>
          <WindowButton $fg="#77753e" aria-label="Развернуть">❐</WindowButton>
          <WindowButton $w={27} $bg="#ca4b45" $fg="#f8dedd" aria-label="Закрыть">×</WindowButton>
        </WindowButtons>
      </DialogTitle>
      <DialogBody>
        <MenuBar $dialog>{['Файл', 'Правка', 'Переменная', 'Вид', '?'].map(m => <a key={m} href="#menu">{m}</a>)}</MenuBar>
        <DialogTools><ToolItems items={dialogTools} width={16} size={12} /><Grip /></DialogTools>
        <VarTable>
          <colgroup><col width="12" /><col width="11" /><col width="72" /><col /><col width="59" /><col width="61" /><col width="12" /></colgroup>
          <thead>
            <tr><th><Icon name="flag" size={9} /></th><th>?</th><th>Имя</th><th>Выражение</th><th>Значение</th><th>Комментарий</th><th><Icon name="person2" size={10} /></th></tr>
          </thead>
          <tbody>
            <GroupRow><td colSpan={7}><GroupLabel><Icon name="part" size={8} />Группа</GroupLabel></td></GroupRow>
            {variables.map(v => (
              <VarRow key={v.name} $on={v.on}>
                <td><Icon name="flag" size={9} /></td><td /><td><b>{v.name}</b></td>
                <td>{v.expr}{v.on && <CellDrop aria-label="Выбрать значение">▾</CellDrop>}</td><td>{v.value}</td><td /><td />
              </VarRow>
            ))}
          </tbody>
        </VarTable>
        <DialogFoot><PushButton>OK</PushButton><PushButton>Отменить</PushButton></DialogFoot>
      </DialogBody>
    </Dialog>
  );
}

export default function App() {
  return (
    <>
      <Global />
      <Screen>
        <AppWindow>
          <TitleBar>
            <Icon name="app" size={11} />
            <AppTitle>T-FLEX CAD x64 - Без имени 1</AppTitle>
            <WindowButtons>
              <WindowButton aria-label="Свернуть">–</WindowButton>
              <WindowButton aria-label="Развернуть">❐</WindowButton>
              <WindowButton $w={22} $bg="#bcbcbc" $fg="#dedede" aria-label="Закрыть">×</WindowButton>
            </WindowButtons>
          </TitleBar>
          <MenuBar>{menus.map(m => <a key={m} href="#menu">{m}</a>)}</MenuBar>
          <ToolbarRow>
            <Toolbar><ToolItems items={mainTools} /><Grip $push={40} /></Toolbar>
            <Toolbar $pad={3}><ToolItems items={sideTools} /><Grip /></Toolbar>
          </ToolbarRow>
          <StyleBar>
            <Icon name="layers" size={13} />
            <Gap $w={2} />
            <LayerSelect aria-label="Слой"><option>Основной</option></LayerSelect>
            <Spin>▾</Spin>
            <Icon name="layers" size={12} />
            <NumberField aria-label="Уровень" defaultValue="0" />
            <Spin>▴<br />▾</Spin>
            <Icon name="people" size={13} />
            <NumberField aria-label="Приоритет" defaultValue="0" />
            <Spin>▴<br />▾</Spin>
            <Icon name="palette" size={15} />
            <Swatch aria-label="Цвет" />
            <SnapBox><ToolItems items={snapTools} width={14} size={12} /></SnapBox>
          </StyleBar>
          <Body>
            <LeftDock />
            <Gutter />
            <DocArea>
              <DocTabs>
                <DocTab $on><Icon name="part" size={9} />Без имени 1<span>✕</span></DocTab>
                <Gap $w={3} />
                <DocTab><Icon name="tree" size={9} />Приветствие<span>✕</span></DocTab>
                <Fill />
                <Arrow aria-label="Список документов">▾</Arrow>
              </DocTabs>
              <ViewRow>
                <Canvas>
                  <Scene />
                  <VariablesDialog />
                  <Spot />
                  <Pointer width="16" height="18" viewBox="0 0 16 18">
                    <circle cx="5" cy="5" r="4" fill="#d8471c" />
                    <path d="M5 5l2 1 4 5-1 5H6l-3-4z" fill="#fff" stroke="#555" strokeWidth=".7" />
                  </Pointer>
                </Canvas>
                <VBar $w={11} $bg="#f4f5f3"><Arrow aria-label="Вверх">▴</Arrow><Thumb $v $len="224px" $push="190px" /><Fill /><Arrow aria-label="Вниз">▾</Arrow></VBar>
              </ViewRow>
              <HBar><Gap $w={4} /><Arrow aria-label="Влево">‹</Arrow><Thumb $push="32%" $len="37%" /><Fill /><Arrow aria-label="Вправо">›</Arrow></HBar>
              <HBar $h={3} />
            </DocArea>
            <RightTools>
              <RightStrip>
                {rightTools.map((t, i) => <RightTool key={i} $on={t.on} aria-label={`Вид ${i + 1}`}><Icon name={t.g} size={16} /></RightTool>)}
              </RightStrip>
            </RightTools>
          </Body>
          <StatusBar><Icon name="snap" size={7} />Редактировать переменные</StatusBar>
        </AppWindow>
      </Screen>
    </>
  );
}
